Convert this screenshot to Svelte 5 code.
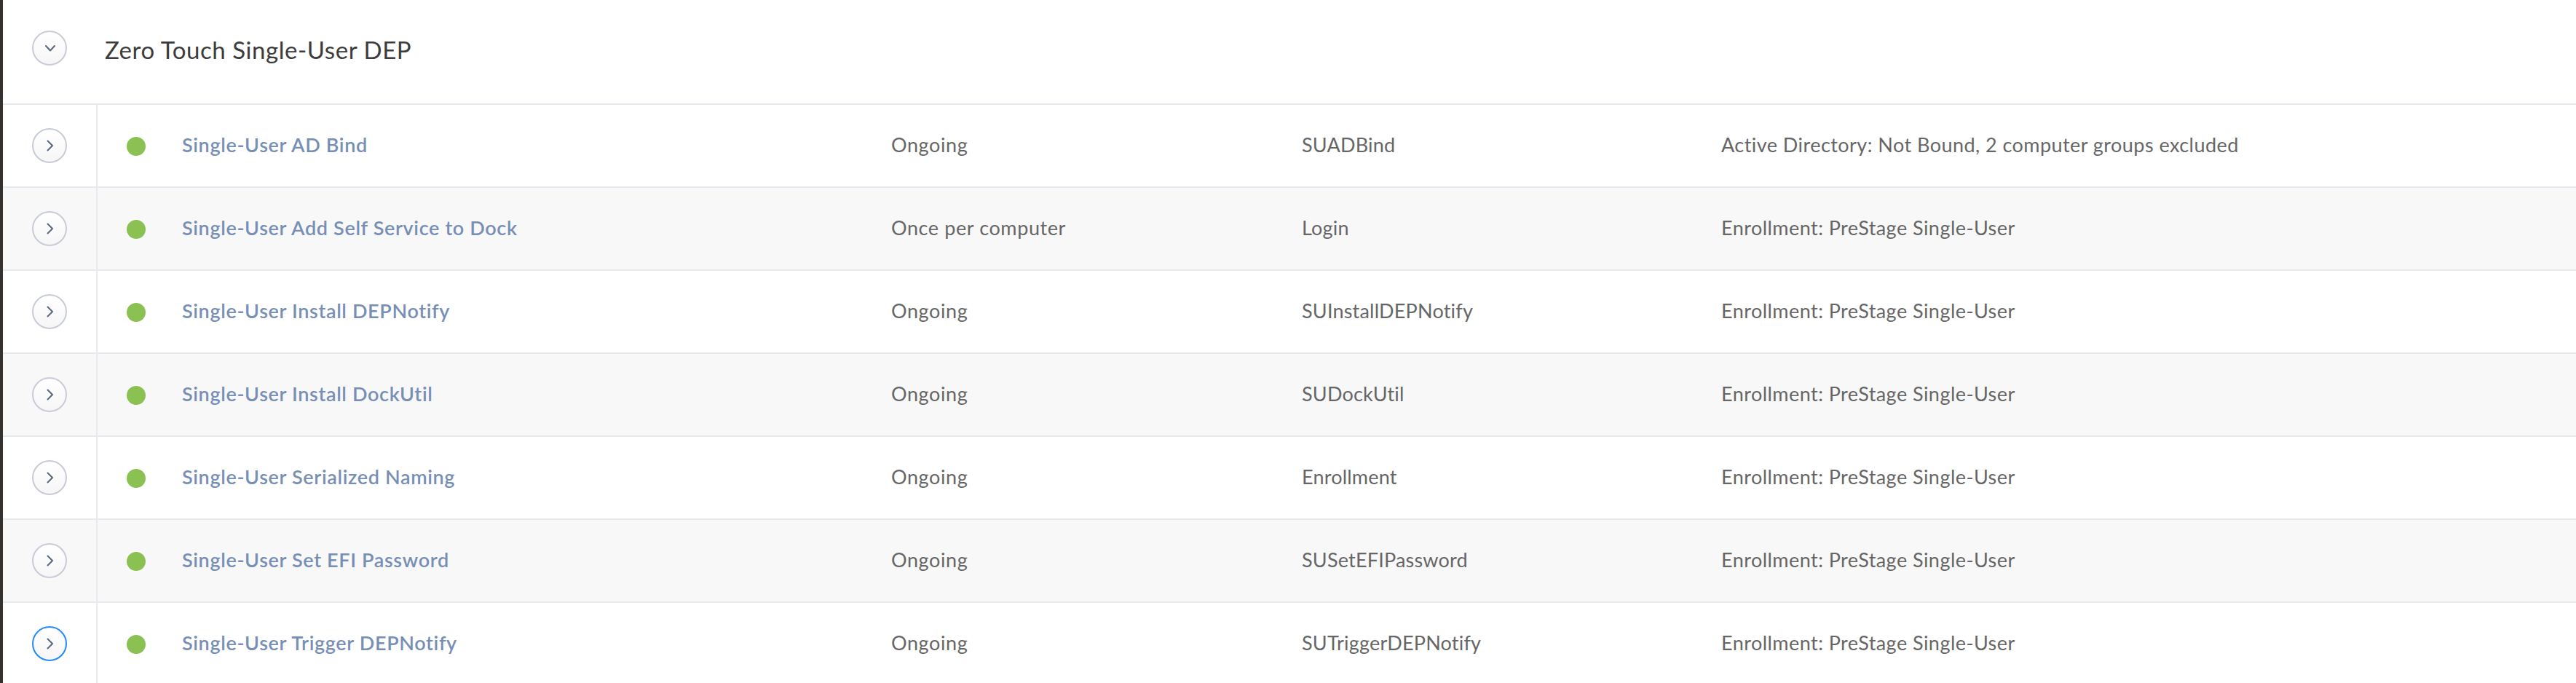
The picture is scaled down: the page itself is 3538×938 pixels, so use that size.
<script lang="ts">
  interface Policy {
    name: string;
    frequency: string;
    trigger: string;
    scope: string;
    focused?: boolean;
  }

  const category = 'Zero Touch Single-User DEP';

  const policies: Policy[] = [
    {
      name: 'Single-User AD Bind',
      frequency: 'Ongoing',
      trigger: 'SUADBind',
      scope: 'Active Directory: Not Bound, 2 computer groups excluded',
    },
    {
      name: 'Single-User Add Self Service to Dock',
      frequency: 'Once per computer',
      trigger: 'Login',
      scope: 'Enrollment: PreStage Single-User',
    },
    {
      name: 'Single-User Install DEPNotify',
      frequency: 'Ongoing',
      trigger: 'SUInstallDEPNotify',
      scope: 'Enrollment: PreStage Single-User',
    },
    {
      name: 'Single-User Install DockUtil',
      frequency: 'Ongoing',
      trigger: 'SUDockUtil',
      scope: 'Enrollment: PreStage Single-User',
    },
    {
      name: 'Single-User Serialized Naming',
      frequency: 'Ongoing',
      trigger: 'Enrollment',
      scope: 'Enrollment: PreStage Single-User',
    },
    {
      name: 'Single-User Set EFI Password',
      frequency: 'Ongoing',
      trigger: 'SUSetEFIPassword',
      scope: 'Enrollment: PreStage Single-User',
    },
    {
      name: 'Single-User Trigger DEPNotify',
      frequency: 'Ongoing',
      trigger: 'SUTriggerDEPNotify',
      scope: 'Enrollment: PreStage Single-User',
      focused: true,
    },
  ];
</script>

<main class="policies">
  <header class="category">
    <button class="toggle" aria-label="Collapse category">
      <svg width="44" height="44" viewBox="0 0 44 44">
        <path d="M17 19 L23 25.5 L29 19" />
      </svg>
    </button>
    <h2>{category}</h2>
  </header>

  {#each policies as policy}
    <div class="row">
      <div class="expand">
        <button class="toggle" class:focused={policy.focused} aria-label="Expand policy">
          <svg width="44" height="44" viewBox="0 0 44 44">
            <path d="M19.5 15.5 L26 22 L19.5 28.5" />
          </svg>
        </button>
      </div>
      <span class="status"></span>
      <div class="cell name"><a href="#policy">{policy.name}</a></div>
      <div class="cell frequency">{policy.frequency}</div>
      <div class="cell trigger">{policy.trigger}</div>
      <div class="cell scope">{policy.scope}</div>
    </div>
  {/each}
</main>

<style>
  :global(body) {
    background: #fff;
  }

  .policies {
    box-sizing: border-box;
    height: 938px;
    overflow: hidden;
    border-left: 4px solid #34312f;
    background: #fff;
    color: #666;
    font-family: Lato, 'Open Sans', sans-serif;
    font-size: 27px;
    font-variant-ligatures: none;
    line-height: 36px;
    white-space: nowrap;
  }

  .category {
    box-sizing: border-box;
    display: flex;
    align-items: flex-start;
    gap: 52px;
    height: 144px;
    padding: 42px 0 0 40px;
    border-bottom: 2px solid #e6eaee;
  }

  h2 {
    margin: 4px 0 0;
    color: #3c3c3c;
    font-size: 33px;
    font-weight: 400;
    letter-spacing: 0.55px;
    line-height: 44px;
  }

  .row {
    box-sizing: border-box;
    display: grid;
    grid-template-columns: 130px 116px 974px 564px 576px 1fr;
    align-items: center;
    height: 114px;
    border-bottom: 2px solid #e6eaee;
  }

  .row:nth-child(odd) {
    background: #f8f8f8;
  }

  .expand {
    box-sizing: border-box;
    display: flex;
    align-items: center;
    width: 130px;
    height: 112px;
    padding-left: 40px;
    border-right: 2px solid #e7e9ee;
  }

  .toggle {
    box-sizing: border-box;
    display: block;
    flex: none;
    width: 48px;
    height: 48px;
    padding: 0;
    border: 2px solid #c8ccd7;
    border-radius: 50%;
    background: linear-gradient(#fff, #f6f6f6);
    cursor: pointer;
  }

  .toggle.focused {
    border-color: #2589ff;
  }

  .toggle svg {
    display: block;
  }

  .toggle path {
    fill: none;
    stroke: #596783;
    stroke-width: 2;
    stroke-linecap: round;
    stroke-linejoin: round;
  }

  .status {
    width: 26px;
    height: 26px;
    margin: 2px 0 0 40px;
    border-radius: 50%;
    background: #8bc053;
  }

  .cell {
    padding-bottom: 2px;
  }

  .name {
    letter-spacing: 0.65px;
  }

  .name a {
    color: #778fb5;
    font-weight: 600;
    text-decoration: none;
  }

  .frequency {
    letter-spacing: 0.6px;
  }

  .trigger {
    letter-spacing: 0.2px;
  }

  .scope {
    letter-spacing: 0.45px;
  }
</style>
